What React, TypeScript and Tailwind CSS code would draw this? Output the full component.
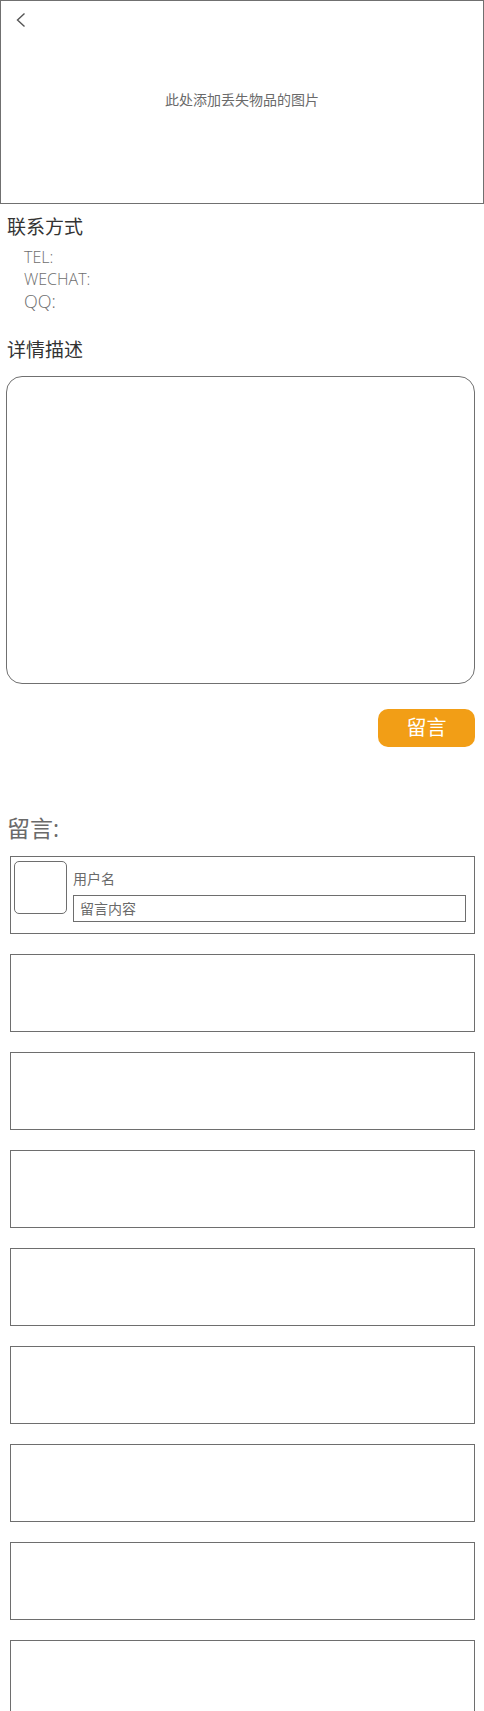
const font = { fontFamily: '"Open Sans", "Noto Sans CJK SC", sans-serif' };

const CommentBox = ({ filled }: { filled?: boolean }) => (
  <div className="h-[78px] border border-[#6e6e6e] bg-white">
    {filled && (
      <div className="flex pt-[4px] pl-[3px] pr-[8px]">
        <div className="w-[53px] h-[53px] shrink-0 rounded-[5px] border border-[#6e6e6e]" />
        <div className="ml-[6px] flex-1">
          <div className="mt-[9px] text-[14px] leading-[18px] text-[#6a6a6a]">用户名</div>
          <div className="mt-[7px] h-[27px] border border-[#6e6e6e] pl-[6px] text-[14px] leading-[25px] text-[#6a6a6a]">
            留言内容
          </div>
        </div>
      </div>
    )}
  </div>
);

export default function App() {
  return (
    <div className="w-[484px] min-h-[1711px] bg-white overflow-hidden" style={font}>
      <div className="relative h-[204px] border border-[#707070] flex items-center justify-center">
        <svg
          className="absolute left-[14px] top-[11px]"
          width="12"
          height="16"
          viewBox="0 0 12 16"
          fill="none"
          stroke="#555"
          strokeWidth="1.4"
        >
          <polyline points="9.5,1.5 2.5,8 9.5,14.5" />
        </svg>
        <span className="text-[14px] text-[#6a6a6a] -mt-[6px]">此处添加丢失物品的图片</span>
      </div>

      <div className="pl-[7px] pr-[9px]">
        <div className="mt-[12px] text-[19px] leading-[22px] text-[#333]">联系方式</div>
        <div className="mt-[8px] pl-[17px] text-[#6e6e6e] font-light">
          <div className="text-[16px] leading-[22px]">TEL:</div>
          <div className="text-[16px] leading-[22px]">WECHAT:</div>
          <div className="text-[18px] leading-[22px]">QQ:</div>
        </div>

        <div className="mt-[27px] text-[19px] leading-[22px] text-[#333]">详情描述</div>

        <div className="mt-[15px] -ml-[1px] h-[308px] rounded-[16px] border border-[#707070]" />

        <div className="mt-[25px] flex justify-end">
          <button className="w-[97px] h-[38px] rounded-[10px] bg-[#f29e16] text-white text-[20px] leading-none">
            留言
          </button>
        </div>

        <div className="mt-[68px] text-[23px] leading-[26px] text-[#6a6a6a]">留言:</div>

        <div className="mt-[15px] ml-[3px] flex flex-col gap-[20px]">
          <CommentBox filled />
          <CommentBox />
          <CommentBox />
          <CommentBox />
          <CommentBox />
          <CommentBox />
          <CommentBox />
          <CommentBox />
          <CommentBox />
        </div>
      </div>
    </div>
  );
}
